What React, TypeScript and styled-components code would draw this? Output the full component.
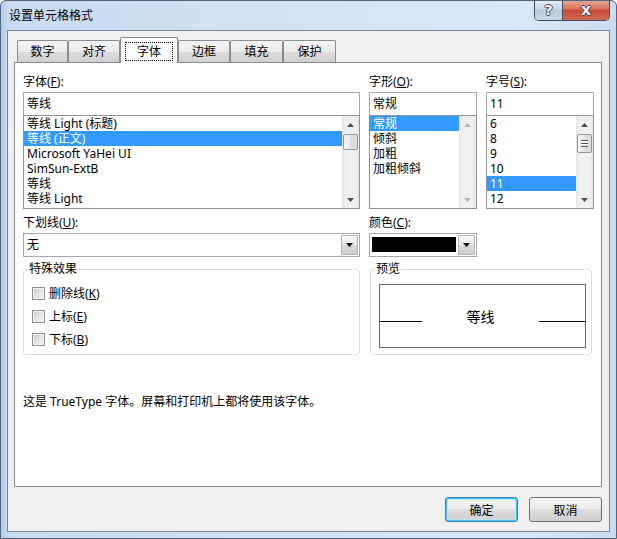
import React from "react";
import styled, { createGlobalStyle, css } from "styled-components";

const GlobalStyle = createGlobalStyle`
  html, body {
    margin: 0;
    padding: 0;
    background: #ffffff;
  }
  body {
    font-family: "Noto Sans", "Noto Sans CJK SC", sans-serif;
    font-size: 12px;
    color: #000000;
  }
  * {
    box-sizing: border-box;
  }
`;

const fontList = [
  "等线 Light (标题)",
  "等线 (正文)",
  "Microsoft YaHei UI",
  "SimSun-ExtB",
  "等线",
  "等线 Light",
];
const styleList = ["常规", "倾斜", "加粗", "加粗倾斜"];
const sizeList = ["6", "8", "9", "10", "11", "12"];
const tabs = [
  { name: "数字", width: 51 },
  { name: "对齐", width: 52 },
  { name: "字体", width: 58 },
  { name: "边框", width: 52 },
  { name: "填充", width: 53 },
  { name: "保护", width: 53 },
];

const Arrow = ({ down, color = "#4d4d4d" }: { down?: boolean; color?: string }) => (
  <svg width="7" height="4" viewBox="0 0 7 4">
    <polygon points={down ? "0,0 7,0 3.5,4" : "0,4 7,4 3.5,0"} fill={color} />
  </svg>
);

const Grip = () => (
  <svg width="7" height="7" viewBox="0 0 7 7">
    <line x1="0" y1="0.5" x2="7" y2="0.5" stroke="#555" />
    <line x1="0" y1="1.5" x2="7" y2="1.5" stroke="#fff" />
    <line x1="0" y1="3.5" x2="7" y2="3.5" stroke="#555" />
    <line x1="0" y1="4.5" x2="7" y2="4.5" stroke="#fff" />
    <line x1="0" y1="6.5" x2="7" y2="6.5" stroke="#555" />
  </svg>
);

interface ListProps {
  items: string[];
  selected: number;
  thumb?: boolean;
  grip?: boolean;
  disabled?: boolean;
}

const List: React.FC<ListProps> = ({ items, selected, thumb, grip, disabled }) => (
  <ListBox>
    <ListItems>
      {items.map((item, i) => (
        <ListItem key={item} $selected={i === selected}>
          {item}
        </ListItem>
      ))}
    </ListItems>
    <ScrollBar>
      <ScrollArrow>
        <Arrow color={disabled ? "#b4b4b4" : "#4d4d4d"} />
      </ScrollArrow>
      {thumb && <ScrollThumb $tall={grip}>{grip && <Grip />}</ScrollThumb>}
      <ScrollTrack />
      <ScrollArrow>
        <Arrow down color={disabled ? "#b4b4b4" : "#4d4d4d"} />
      </ScrollArrow>
    </ScrollBar>
  </ListBox>
);

const App: React.FC = () => {
  return (
    <>
      <GlobalStyle />
      <Window>
        <TitleBar>
          <Title>设置单元格格式</Title>
          <CaptionGroup>
            <CaptionButton>?</CaptionButton>
            <CaptionButton $close>X</CaptionButton>
          </CaptionGroup>
        </TitleBar>

        <Client>
          <TabStrip>
            {tabs.map((t) => (
              <Tab key={t.name} $width={t.width} $selected={t.name === "字体"}>
                <TabLabel $focused={t.name === "字体"}>{t.name}</TabLabel>
              </Tab>
            ))}
          </TabStrip>

          <TabPanel>
            <Row>
              <Column>
                <Label>
                  字体(<u>F</u>):
                </Label>
                <Field>等线</Field>
                <List items={fontList} selected={1} thumb />
              </Column>
              <Column>
                <Label>
                  字形(<u>O</u>):
                </Label>
                <Field>常规</Field>
                <List items={styleList} selected={0} disabled />
              </Column>
              <Column>
                <Label>
                  字号(<u>S</u>):
                </Label>
                <Field>11</Field>
                <List items={sizeList} selected={4} thumb grip />
              </Column>
            </Row>

            <Row>
              <Column>
                <SubLabel>
                  下划线(<u>U</u>):
                </SubLabel>
                <Combo>
                  <ComboText>无</ComboText>
                  <ComboButton>
                    <Arrow down color="#000" />
                  </ComboButton>
                </Combo>
              </Column>
              <Column>
                <SubLabel>
                  颜色(<u>C</u>):
                </SubLabel>
                <Combo>
                  <ComboSwatch />
                  <ComboButton>
                    <Arrow down color="#000" />
                  </ComboButton>
                </Combo>
              </Column>
            </Row>

            <Row>
              <Group>
                <Legend>特殊效果</Legend>
                <CheckRow>
                  <CheckBox />
                  <CheckText>
                    删除线(<u>K</u>)
                  </CheckText>
                </CheckRow>
                <CheckRow>
                  <CheckBox />
                  <CheckText>
                    上标(<u>E</u>)
                  </CheckText>
                </CheckRow>
                <CheckRow>
                  <CheckBox />
                  <CheckText>
                    下标(<u>B</u>)
                  </CheckText>
                </CheckRow>
              </Group>
              <PreviewGroup>
                <Legend>预览</Legend>
                <PreviewBox>
                  <PreviewLine />
                  <PreviewText>等线</PreviewText>
                  <PreviewLine />
                </PreviewBox>
              </PreviewGroup>
            </Row>

            <Description>这是 TrueType 字体。屏幕和打印机上都将使用该字体。</Description>
          </TabPanel>

          <ButtonRow>
            <DialogButton $default>确定</DialogButton>
            <DialogButton>取消</DialogButton>
          </ButtonRow>
        </Client>
      </Window>
    </>
  );
};

// Styled components
const Window = styled.div`
  width: 617px;
  height: 539px;
  display: flex;
  flex-direction: column;
  border: 1px solid #55657b;
  border-radius: 6px 6px 0 0;
  background: linear-gradient(90deg, #b3cbe7 0, #c8dbf1 7px, #d3e3f5 50%, #d9e8f8 85%, #cadcf1 100%);
  overflow: hidden;
`;

const TitleBar = styled.div`
  height: 29px;
  display: flex;
  align-items: flex-start;
`;

const Title = styled.div`
  flex: 1;
  padding: 7px 0 0 8px;
  line-height: 16px;
  font-size: 12px;
`;

const CaptionGroup = styled.div`
  display: flex;
  margin: -1px 6px 0 0;
  border: 1px solid #3f4d62;
  border-top: none;
  border-radius: 0 0 5px 5px;
  overflow: hidden;
`;

const CaptionButton = styled.div<{ $close?: boolean }>`
  width: ${(p) => (p.$close ? 46 : 28)}px;
  height: 20px;
  display: flex;
  align-items: center;
  justify-content: center;
  font-family: "DejaVu Sans", sans-serif;
  font-weight: bold;
  font-size: ${(p) => (p.$close ? 13 : 14)}px;
  color: #ffffff;
  text-shadow: 1px 0 0 #3a4558, -1px 0 0 #3a4558, 0 1px 0 #3a4558, 0 -1px 0 #3a4558;
  background: ${(p) =>
    p.$close
      ? "linear-gradient(180deg, #e9a99b 0, #d9745f 45%, #c64a33 50%, #d06a52 100%)"
      : "linear-gradient(180deg, #e4ecf5 0, #ccd8e7 45%, #b8c8db 50%, #cad8e8 100%)"};
  ${(p) => !p.$close && css`border-right: 1px solid #3f4d62;`}
`;

const Client = styled.div`
  flex: 1;
  margin: 0 6px 6px 6px;
  border: 1px solid #7d8590;
  background: #f0f0f0;
  padding: 6px 7px 0 6px;
  display: flex;
  flex-direction: column;
`;

const TabStrip = styled.div`
  height: 25px;
  display: flex;
  align-items: flex-end;
  padding-left: 3px;
  position: relative;
  z-index: 1;
`;

const Tab = styled.div<{ $width: number; $selected?: boolean }>`
  width: ${(p) => p.$width}px;
  height: 22px;
  display: flex;
  border: 1px solid #898c95;
  border-bottom: none;
  border-radius: 2px 2px 0 0;
  background: linear-gradient(180deg, #f3f3f3 0, #ebebeb 50%, #dddddd 50%, #d0d0d0 100%);
  ${(p) =>
    p.$selected &&
    css`
      height: 26px;
      margin-bottom: -1px;
      padding: 4px 4px 2px;
      background: #ffffff;
    `}
`;

const TabLabel = styled.span<{ $focused?: boolean }>`
  flex: 1;
  display: flex;
  align-items: center;
  justify-content: center;
  line-height: 18px;
  border: ${(p) => (p.$focused ? "1px dotted #000" : "none")};
`;

const TabPanel = styled.div`
  flex: 1;
  background: #ffffff;
  border: 1px solid #898c95;
  padding: 10px 7px 0 8px;
  display: flex;
  flex-direction: column;
`;

const Row = styled.div`
  display: grid;
  grid-template-columns: 337px 108px 108px;
  column-gap: 9px;
  align-items: start;
`;

const Column = styled.div`
  display: flex;
  flex-direction: column;
`;

const Label = styled.div`
  height: 17px;
  line-height: 17px;
  margin-bottom: 2px;
`;

const SubLabel = styled(Label)`
  margin-top: 5px;
`;

const Field = styled.div`
  height: 23px;
  border: 1px solid #a3a9b1;
  border-bottom: none;
  padding-left: 3px;
  line-height: 21px;
  background: #ffffff;
`;

const ListBox = styled.div`
  height: 94px;
  border: 1px solid #8d939b;
  background: #ffffff;
  display: flex;
`;

const ListItems = styled.div`
  flex: 1;
  overflow: hidden;
`;

const ListItem = styled.div<{ $selected?: boolean }>`
  height: 15px;
  line-height: 15px;
  padding-left: 3px;
  white-space: nowrap;
  overflow: hidden;
  ${(p) =>
    p.$selected &&
    css`
      background: #3399ff;
      color: #ffffff;
    `}
`;

const ScrollBar = styled.div`
  width: 17px;
  display: flex;
  flex-direction: column;
  background: linear-gradient(90deg, #e3e3e3 0, #efefef 3px, #f1f1f1 13px, #e7e7e7 100%);
`;

const ScrollArrow = styled.div`
  height: 17px;
  display: flex;
  align-items: center;
  justify-content: center;
`;

const ScrollThumb = styled.div<{ $tall?: boolean }>`
  height: ${(p) => (p.$tall ? 19 : 16)}px;
  margin: 1px 1px 0;
  border: 1px solid #959595;
  border-radius: 2px;
  background: linear-gradient(90deg, #f6f6f6 0, #ececec 45%, #dcdcdc 55%, #dedede 100%);
  display: flex;
  align-items: center;
  justify-content: center;
`;

const ScrollTrack = styled.div`
  flex: 1;
`;

const Combo = styled.div`
  height: 24px;
  border: 1px solid #a3a9b1;
  background: #ffffff;
  display: flex;
`;

const ComboText = styled.div`
  flex: 1;
  padding-left: 3px;
  line-height: 22px;
`;

const ComboSwatch = styled.div`
  flex: 1;
  margin: 3px 1px 4px 2px;
  background: #000000;
`;

const ComboButton = styled.div`
  width: 17px;
  margin: 1px;
  border: 1px solid #b3b3b3;
  border-radius: 1px;
  background: linear-gradient(180deg, #f6f6f6 0, #e9e9e9 50%, #d9d9d9 50%, #d0d0d0 100%);
  display: flex;
  align-items: center;
  justify-content: center;
`;

const Group = styled.fieldset`
  margin: 4px 0 0;
  padding: 5px 8px 4px;
  min-width: 0;
  height: 94px;
  border: 1px solid #d5dfe5;
  border-radius: 3px;
`;

const PreviewGroup = styled(Group)`
  grid-column: 2 / 4;
  margin-left: 1px;
  margin-right: 2px;
  padding: 7px 5px 0 8px;
`;

const Legend = styled.legend`
  padding: 0 1px;
  margin-left: -4px;
  line-height: 16px;
  font-size: 12px;
`;

const CheckRow = styled.div`
  height: 23px;
  display: flex;
  align-items: center;
  gap: 4px;
`;

const CheckText = styled.span`
  line-height: 17px;
`;

const CheckBox = styled.span`
  position: relative;
  width: 13px;
  height: 13px;
  border: 1px solid #8e8f8f;
  background: #f4f4f4;

  &::after {
    content: "";
    position: absolute;
    inset: 1px;
    background: linear-gradient(135deg, #cbcdd0 0, #e6e7e8 60%, #f4f4f4 100%);
  }
`;

const PreviewBox = styled.div`
  height: 64px;
  border: 1px solid #6a6a6a;
  display: grid;
  grid-template-columns: 42px 1fr 46px;
  align-items: start;
`;

const PreviewLine = styled.div`
  margin-top: 36px;
  border-top: 1px solid #000000;
`;

const PreviewText = styled.div`
  margin-top: 23px;
  text-align: center;
  font-size: 14px;
  line-height: 18px;
`;

const Description = styled.div`
  margin-top: 38px;
  line-height: 17px;
`;

const ButtonRow = styled.div`
  display: flex;
  justify-content: flex-end;
  gap: 11px;
  padding: 10px 0 9px;
`;

const DialogButton = styled.div<{ $default?: boolean }>`
  width: 73px;
  height: 25px;
  display: flex;
  align-items: center;
  justify-content: center;
  border: 1px solid #707070;
  border-radius: 3px;
  background: linear-gradient(180deg, #f2f2f2 0, #ebebeb 50%, #dddddd 50%, #cfcfcf 100%);
  ${(p) =>
    p.$default &&
    css`
      border-color: #3c7fb1;
      box-shadow: inset 0 0 0 1px #48c6f0, inset 0 0 0 2px #b8e3f7;
    `}
`;

export default App;
